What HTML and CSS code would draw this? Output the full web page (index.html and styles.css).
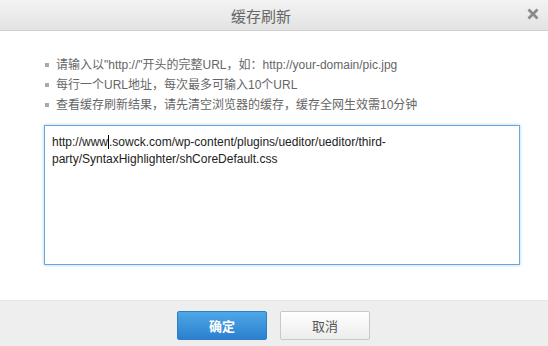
FILE: index.html
```html
<!DOCTYPE html>
<html>
<head>
<meta charset="utf-8">
<link rel="stylesheet" href="styles.css">
</head>
<body>
<div class="dialog">
  <div class="header">
    <span class="title">缓存刷新</span>
    <span class="close">
      <svg width="12" height="12" viewBox="0 0 12 12"><path d="M1.5 1.5 L10.5 10.5 M10.5 1.5 L1.5 10.5" stroke="#8a8a8a" stroke-width="2.8" stroke-linecap="butt"/></svg>
    </span>
  </div>
  <div class="body">
    <ul class="tips">
      <li>请输入以"http://"开头的完整URL，如：http://your-domain/pic.jpg</li>
      <li>每行一个URL地址，每次最多可输入10个URL</li>
      <li>查看缓存刷新结果，请先清空浏览器的缓存，缓存全网生效需10分钟</li>
    </ul>
    <div class="area">http://www<span class="caret"></span>.sowck.com/wp-content/plugins/ueditor/ueditor/third-<br>party/SyntaxHighlighter/shCoreDefault.css</div>
  </div>
  <div class="footer">
    <button class="btn primary">确定</button>
    <button class="btn">取消</button>
  </div>
</div>
</body>
</html>
```

FILE: styles.css
```css
html, body {
  margin: 0;
  padding: 0;
  background: #fff;
}
.dialog {
  width: 548px;
  height: 346px;
  display: flex;
  flex-direction: column;
  font-family: "Liberation Sans", "Noto Sans CJK SC", sans-serif;
}
.header {
  height: 30px;
  border-bottom: 1px solid #cfcfcf;
  background: linear-gradient(#f3f3f3, #e3e3e3);
  display: flex;
  align-items: center;
  justify-content: center;
  position: relative;
}
.title {
  font-size: 15px;
  color: #666;
  margin-left: -26px;
}
.close {
  position: absolute;
  right: 9px;
  top: 8px;
  width: 12px;
  height: 12px;
  display: flex;
}
.body {
  flex: 1;
  padding: 24px 28px 0 44px;
  display: flex;
  flex-direction: column;
}
.tips {
  list-style: none;
  margin: 0;
  padding: 0;
  font-size: 12px;
  color: #666;
}
.tips li {
  height: 20px;
  line-height: 20px;
  display: flex;
  align-items: center;
}
.tips li::before {
  content: "";
  width: 4px;
  height: 4px;
  background: #aaa;
  margin: 0 7px 0 1px;
}
.area {
  margin-top: 10px;
  width: 460px;
  height: 122px;
  border: 1px solid #6ba6d9;
  box-shadow: 0 0 3px rgba(110, 175, 230, 0.6);
  padding: 8px 7px;
  font-size: 12px;
  line-height: 17px;
  color: #222;
}
.caret {
  display: inline-block;
  width: 0;
  height: 14px;
  border-left: 1px solid #000;
  vertical-align: -3px;
}
.footer {
  height: 46px;
  border-top: 1px solid #e6e6e6;
  background: #eeeeee;
  display: flex;
  justify-content: center;
  align-items: flex-start;
  gap: 14px;
  padding-top: 10px;
  box-sizing: border-box;
}
.btn {
  width: 90px;
  height: 29px;
  border: 1px solid #c8c8c8;
  border-radius: 2px;
  background: linear-gradient(#ffffff, #ececec);
  font-family: "Liberation Sans", "Noto Sans CJK SC", sans-serif;
  font-size: 13px;
  color: #555;
  padding: 0;
  margin-left: -1px;
}
.btn.primary {
  border-color: #2f7fc6;
  background: linear-gradient(#4ea7e6, #2b80cf);
  color: #fff;
  font-weight: bold;
}
```
